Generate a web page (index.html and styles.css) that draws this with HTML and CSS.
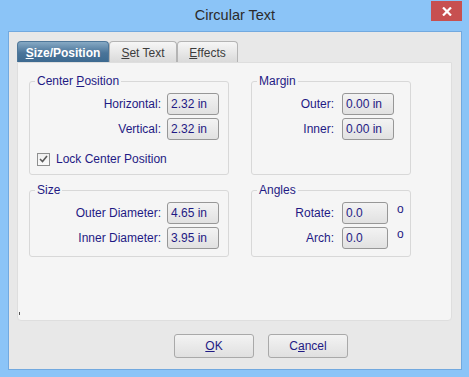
FILE: index.html
```html
<!DOCTYPE html>
<html lang="en">
<head>
    <meta charset="UTF-8">
    <title>Circular Text</title>
    <link rel="stylesheet" href="styles.css">
</head>
<body>
    <div class="window">
        <div class="titlebar">
            <span></span>
            <div class="title">Circular Text</div>
            <div class="close">
                <svg width="10" height="9" viewBox="0 0 10 9">
                    <path d="M1 0.5 L9 8.5 M9 0.5 L1 8.5" stroke="#fff" stroke-width="2.2"/>
                </svg>
            </div>
        </div>

        <div class="client">
            <div class="tabs">
                <div class="tab active"><u>S</u>ize/Position</div>
                <div class="tab tab-text"><u>S</u>et Text</div>
                <div class="tab tab-effects"><u>E</u>ffects</div>
            </div>

            <div class="panel">
                <div class="groups">
                    <fieldset class="group left">
                        <legend>Center <u>P</u>osition</legend>
                        <div class="rows">
                            <span class="label">Horizontal:</span>
                            <span class="field">2.32 in</span>
                            <span class="label">Vertical:</span>
                            <span class="field">2.32 in</span>
                        </div>
                        <div class="check">
                            <span class="box">
                                <svg width="9" height="8" viewBox="0 0 9 8">
                                    <path d="M1 4 L3.5 6.5 L8 1" fill="none" stroke="#5a5a5a" stroke-width="1.6"/>
                                </svg>
                            </span>
                            Lock Center Position
                        </div>
                    </fieldset>

                    <fieldset class="group right">
                        <legend>Margin</legend>
                        <div class="rows">
                            <span class="label">Outer:</span>
                            <span class="field">0.00 in</span>
                            <span class="label">Inner:</span>
                            <span class="field">0.00 in</span>
                        </div>
                    </fieldset>

                    <fieldset class="group left">
                        <legend>Size</legend>
                        <div class="rows">
                            <span class="label">Outer Diameter:</span>
                            <span class="field">4.65 in</span>
                            <span class="label">Inner Diameter:</span>
                            <span class="field">3.95 in</span>
                        </div>
                    </fieldset>

                    <fieldset class="group right">
                        <legend>Angles</legend>
                        <div class="rows angles">
                            <span class="label">Rotate:</span>
                            <span class="field">0.0</span>
                            <span class="deg">o</span>
                            <span class="label">Arch:</span>
                            <span class="field">0.0</span>
                            <span class="deg">o</span>
                        </div>
                    </fieldset>
                </div>
                <span class="tick"></span>
            </div>

            <div class="buttons">
                <div class="button"><u>O</u>K</div>
                <div class="button">C<u>a</u>ncel</div>
            </div>
        </div>
    </div>
</body>
</html>
```

FILE: styles.css
```css
body {
    margin: 0;
    font-family: 'Liberation Sans', Arial, sans-serif;
    font-size: 12px;
    color: #1f1a84;
}

.window {
    width: 469px;
    height: 377px;
    box-sizing: border-box;
    padding: 0 7px 7px 8px;
    background: #8bc4f7;
    display: flex;
    flex-direction: column;
}

.titlebar {
    height: 31px;
    display: grid;
    grid-template-columns: 1fr auto 1fr;
    align-items: start;
}

.title {
    font-size: 14.5px;
    color: #2b2b2b;
    line-height: 30px;
}

.close {
    justify-self: end;
    margin-top: 1px;
    width: 31px;
    height: 20px;
    background: #c75050;
    display: flex;
    align-items: center;
    justify-content: center;
}

.client {
    flex: 1;
    background: #e8e8e8;
    border: 1px solid #72a9df;
    padding: 9px 9px 0 8px;
    display: flex;
    flex-direction: column;
}

.tabs {
    display: flex;
    height: 21px;
}

.tab {
    box-sizing: border-box;
    height: 21px;
    display: flex;
    align-items: center;
    justify-content: center;
    border: 1px solid #b4b4b4;
    border-bottom: none;
    border-radius: 4px 4px 0 0;
    background: linear-gradient(#f6f6f6, #dadada);
    color: #3c3c3c;
    padding-top: 1px;
}

.tab.active {
    width: 92px;
    border-color: #4f7799;
    background: linear-gradient(#86a9c4, #4a7499 55%, #3d6a90);
    color: #fff;
    font-weight: bold;
}

.tab-text {
    width: 68px;
}

.tab-effects {
    width: 61px;
}

.panel {
    box-sizing: border-box;
    height: 259px;
    background: #f5f5f5;
    border: 1px solid #dedede;
    border-radius: 0 0 4px 4px;
    padding: 11px 0 0 11px;
    display: flex;
    flex-direction: column;
}

.groups {
    display: grid;
    grid-template-columns: 200px 160px;
    column-gap: 22px;
    row-gap: 8px;
}

.group {
    margin: 0;
    border: 1px solid #d8d8d8;
    border-radius: 3px;
    padding: 5px 9px 7px 5px;
    min-width: 0;
}

.group legend {
    padding: 0 2px;
    line-height: 14px;
}

.rows {
    display: grid;
    grid-template-columns: 1fr 52px;
    column-gap: 6px;
    row-gap: 3px;
    align-items: center;
}

.group.right {
    padding-right: 16px;
}

.group.right .rows {
    column-gap: 8px;
}

.group.right .rows.angles {
    grid-template-columns: 1fr 46px 14px;
    margin-right: -16px;
}

.label {
    text-align: right;
}

.field {
    box-sizing: border-box;
    height: 22px;
    border: 1px solid #979797;
    border-radius: 3px;
    background: linear-gradient(#f3f3f3, #e1e1e1);
    padding: 0 3px;
    line-height: 21px;
}

.deg {
    align-self: start;
    line-height: 12px;
    margin-top: 1px;
    padding-left: 1px;
}

.check {
    margin-top: 11px;
    margin-left: 2px;
    display: flex;
    align-items: center;
    gap: 6px;
    height: 16px;
}

.check .box {
    box-sizing: border-box;
    width: 13px;
    height: 13px;
    border: 1px solid #8e8f8f;
    background: linear-gradient(#f0f0f0, #fafafa);
    display: flex;
    align-items: center;
    justify-content: center;
}

.tick {
    margin-top: auto;
    margin-bottom: 5px;
    margin-left: -10px;
    width: 1px;
    height: 3px;
    background: #555;
}

.buttons {
    display: flex;
    gap: 14px;
    margin-top: 13px;
    padding-left: 157px;
}

.button {
    box-sizing: border-box;
    width: 80px;
    height: 24px;
    border: 1px solid #a9a9a9;
    border-radius: 3px;
    background: linear-gradient(#f3f3f3, #e0e0e0);
    display: flex;
    align-items: center;
    justify-content: center;
}
```
